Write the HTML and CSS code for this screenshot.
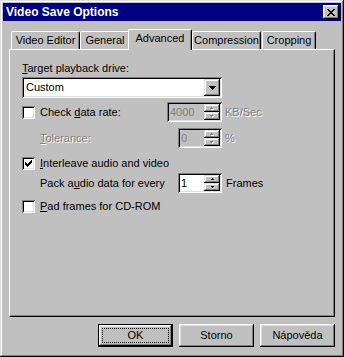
FILE: index.html
```html
<!DOCTYPE html>
<html>
<head>
<meta charset="utf-8">
<link rel="stylesheet" href="styles.css">
</head>
<body>
<div class="window">
  <div class="titlebar">
    <span class="title">Video Save Options</span>
    <span class="close">
      <svg width="8" height="7" viewBox="0 0 8 7" shape-rendering="crispEdges"><path d="M0 0h2v1H0z M6 0h2v1H6z M1 1h2v1H1z M5 1h2v1H5z M2 2h4v1H2z M3 3h2v1H3z M2 4h4v1H2z M1 5h2v1H1z M5 5h2v1H5z M0 6h2v1H0z M6 6h2v1H6z" fill="#000"/></svg>
    </span>
  </div>
  <div class="body">
    <div class="tabs">
      <div class="tab t-ve">Video Editor</div>
      <div class="tab t-gen">General</div>
      <div class="tab active t-adv">Advanced</div>
      <div class="tab t-comp">Compression</div>
      <div class="tab t-crop">Cropping</div>
    </div>
    <div class="panel">
      <div class="label"><u>T</u>arget playback drive:</div>
      <div class="combo">
        <span class="combo-text">Custom</span>
        <span class="drop">
          <svg width="7" height="4" viewBox="0 0 7 4" shape-rendering="crispEdges"><path d="M0 0h7v1H0z M1 1h5v1H1z M2 2h3v1H2z M3 3h1v1H3z" fill="#000"/></svg>
        </span>
      </div>

      <div class="row r1">
        <span class="check"></span>
        <span class="lbl">Check <u>d</u>ata rate:</span>
        <span class="edit wide disabled">
          <span class="val">4000</span>
          <span class="spin">
            <span class="sbtn"><svg width="4" height="3" viewBox="0 0 4 3" shape-rendering="crispEdges"><path d="M2 1h1v1H2z M1 2h3v1H1z" fill="#fff"/><path d="M1 0h1v1H1z M0 1h3v1H0z" fill="#808080"/></svg></span>
            <span class="sbtn"><svg width="4" height="3" viewBox="0 0 4 3" shape-rendering="crispEdges"><path d="M1 1h3v1H1z M2 2h1v1H2z" fill="#fff"/><path d="M0 0h3v1H0z M1 1h1v1H1z" fill="#808080"/></svg></span>
          </span>
        </span>
        <span class="unit etched">KB/Sec</span>
      </div>

      <div class="row r2">
        <span class="lbl etched"><u>T</u>olerance:</span>
        <span class="edit disabled">
          <span class="val">0</span>
          <span class="spin">
            <span class="sbtn"><svg width="4" height="3" viewBox="0 0 4 3" shape-rendering="crispEdges"><path d="M2 1h1v1H2z M1 2h3v1H1z" fill="#fff"/><path d="M1 0h1v1H1z M0 1h3v1H0z" fill="#808080"/></svg></span>
            <span class="sbtn"><svg width="4" height="3" viewBox="0 0 4 3" shape-rendering="crispEdges"><path d="M1 1h3v1H1z M2 2h1v1H2z" fill="#fff"/><path d="M0 0h3v1H0z M1 1h1v1H1z" fill="#808080"/></svg></span>
          </span>
        </span>
        <span class="unit etched">%</span>
      </div>

      <div class="row r3">
        <span class="check">
          <svg width="7" height="7" viewBox="0 0 7 7" shape-rendering="crispEdges"><path d="M6 0h1v1H6z M5 1h2v1H5z M0 2h1v1H0z M4 2h3v1H4z M0 3h2v1H0z M3 3h3v1H3z M0 4h5v1H0z M1 5h3v1H1z M2 6h1v1H2z" fill="#000"/></svg>
        </span>
        <span class="lbl lbl-long"><u>I</u>nterleave audio and video</span>
      </div>

      <div class="row r4">
        <span class="lbl">Pack a<u>u</u>dio data for every</span>
        <span class="edit">
          <span class="val">1</span>
          <span class="spin">
            <span class="sbtn"><svg width="3" height="2" viewBox="0 0 3 2" shape-rendering="crispEdges"><path d="M1 0h1v1H1z M0 1h3v1H0z" fill="#000"/></svg></span>
            <span class="sbtn"><svg width="3" height="2" viewBox="0 0 3 2" shape-rendering="crispEdges"><path d="M0 0h3v1H0z M1 1h1v1H1z" fill="#000"/></svg></span>
          </span>
        </span>
        <span class="unit frames">Frames</span>
      </div>

      <div class="row r5">
        <span class="check"></span>
        <span class="lbl lbl-long"><u>P</u>ad frames for CD-ROM</span>
      </div>
    </div>
    <div class="buttons">
      <span class="btn default"><span class="focus">OK</span></span>
      <span class="btn">Storno</span>
      <span class="btn">Nápověda</span>
    </div>
  </div>
</div>
</body>
</html>
```

FILE: styles.css
```css
* { box-sizing: border-box; }
html, body { margin: 0; padding: 0; background: #c0c0c0; }
body {
  font-family: "Liberation Sans", Arial, sans-serif;
  font-size: 11px;
  color: #000;
}
u { text-underline-offset: 1px; }

.window {
  width: 344px;
  height: 357px;
  background: #c0c0c0;
  padding: 3px;
  box-shadow: inset -1px -1px #000, inset 1px 1px #dfdfdf, inset -2px -2px #808080, inset 2px 2px #fff;
  display: flex;
  flex-direction: column;
}

.titlebar {
  height: 18px;
  background: #000080;
  display: flex;
  align-items: center;
  justify-content: space-between;
  padding: 0 2px 0 3px;
}
.title {
  color: #fff;
  font-weight: bold;
  font-size: 12px;
  line-height: 14px;
}
.close {
  width: 16px;
  height: 14px;
  background: #c0c0c0;
  box-shadow: inset -1px -1px #000, inset 1px 1px #fff, inset -2px -2px #808080, inset 2px 2px #dfdfdf;
  display: flex;
  align-items: center;
  justify-content: center;
}
.close svg { display: block; margin-left: 0; }

.body {
  flex: 1;
  padding: 8px 6px 0 6px;
  display: flex;
  flex-direction: column;
}

.tabs {
  height: 20px;
  display: flex;
  align-items: flex-end;
  padding-left: 2px;
}
.tab {
  height: 18px;
  background: #c0c0c0;
  border-top: 1px solid #fff;
  border-left: 1px solid #fff;
  border-right: 1px solid #000;
  border-radius: 2px 2px 0 0;
  box-shadow: inset -1px 0 #808080;
  text-align: center;
  line-height: 17px;
  white-space: nowrap;
}
.t-ve { width: 69px; }
.t-gen { width: 50px; }
.t-adv { width: 64px; }
.t-comp { width: 69px; }
.t-crop { width: 54px; }
.tab.active {
  height: 21px;
  margin: 0 -1px -1px -2px;
  position: relative;
  z-index: 1;
  line-height: 16px;
}
.t-comp { margin-left: 1px; }
.t-crop { margin-left: 1px; }

.panel {
  height: 268px;
  border-top: 1px solid #fff;
  border-left: 1px solid #fff;
  border-right: 1px solid #000;
  border-bottom: 1px solid #000;
  box-shadow: inset -1px -1px #808080;
  padding: 12px 12px 0 12px;
  display: flex;
  flex-direction: column;
}

.label { line-height: 13px; height: 13px; }

.combo {
  margin-top: 2px;
  width: 200px;
  height: 21px;
  background: #fff;
  padding: 2px;
  box-shadow: inset 1px 1px #808080, inset -1px -1px #fff, inset 2px 2px #000, inset -2px -2px #dfdfdf;
  display: flex;
  align-items: center;
}
.combo-text { flex: 1; padding-left: 2px; line-height: 13px; }
.drop {
  width: 16px;
  height: 17px;
  background: #c0c0c0;
  box-shadow: inset -1px -1px #000, inset 1px 1px #dfdfdf, inset -2px -2px #808080, inset 2px 2px #fff;
  display: flex;
  align-items: center;
  justify-content: center;
}
.drop svg { display: block; }

.row {
  display: grid;
  grid-template-columns: 18px 127px 55px 1fr;
  height: 20px;
  align-items: center;
}
.r1 { margin-top: 4px; }
.r2 { margin-top: 6px; }
.r3 { margin-top: 5px; }
.r4 { margin-top: 0; }
.r5 { margin-top: 3px; }

.row .lbl { grid-column: 2; line-height: 13px; white-space: nowrap; }
.row .lbl-long { grid-column: 2 / 5; }
.row .edit { grid-column: 3; justify-self: end; }
.row .unit { grid-column: 4; margin-left: 3px; line-height: 13px; }
.row .unit.frames { margin-left: 4px; }

.check {
  grid-column: 1;
  width: 13px;
  height: 13px;
  background: #fff;
  box-shadow: inset 1px 1px #808080, inset -1px -1px #fff, inset 2px 2px #000, inset -2px -2px #dfdfdf;
  display: flex;
  align-items: center;
  justify-content: center;
}
.check svg { display: block; }

.etched { color: #808080; text-shadow: 1px 1px #fff; }

.edit {
  width: 44px;
  height: 20px;
  background: #fff;
  padding: 2px;
  box-shadow: inset 1px 1px #808080, inset -1px -1px #fff, inset 2px 2px #000, inset -2px -2px #dfdfdf;
  display: flex;
}
.edit.wide { width: 55px; }
.edit.disabled { background: #c0c0c0; }
.edit.disabled .val { color: #808080; }
.val { flex: 1; padding-left: 1px; line-height: 16px; }
.spin {
  width: 16px;
  display: flex;
  flex-direction: column;
}
.sbtn {
  flex: 1;
  background: #c0c0c0;
  box-shadow: inset -1px -1px #000, inset 1px 1px #dfdfdf, inset -2px -2px #808080, inset 2px 2px #fff;
  display: flex;
  align-items: center;
  justify-content: center;
}
.sbtn svg { display: block; }

.buttons {
  margin-top: 7px;
  display: flex;
  justify-content: flex-end;
  gap: 6px;
}
.btn {
  width: 75px;
  height: 23px;
  background: #c0c0c0;
  box-shadow: inset -1px -1px #000, inset 1px 1px #fff, inset -2px -2px #808080, inset 2px 2px #dfdfdf;
  display: flex;
  align-items: center;
  justify-content: center;
  line-height: 13px;
}
.btn.default {
  padding: 4px;
  box-shadow: inset 0 0 0 1px #000, inset -2px -2px #000, inset 2px 2px #fff, inset -3px -3px #808080, inset 3px 3px #dfdfdf;
}
.focus {
  flex: 1;
  align-self: stretch;
  border: 1px dotted #000;
  display: flex;
  align-items: center;
  justify-content: center;
}
```
